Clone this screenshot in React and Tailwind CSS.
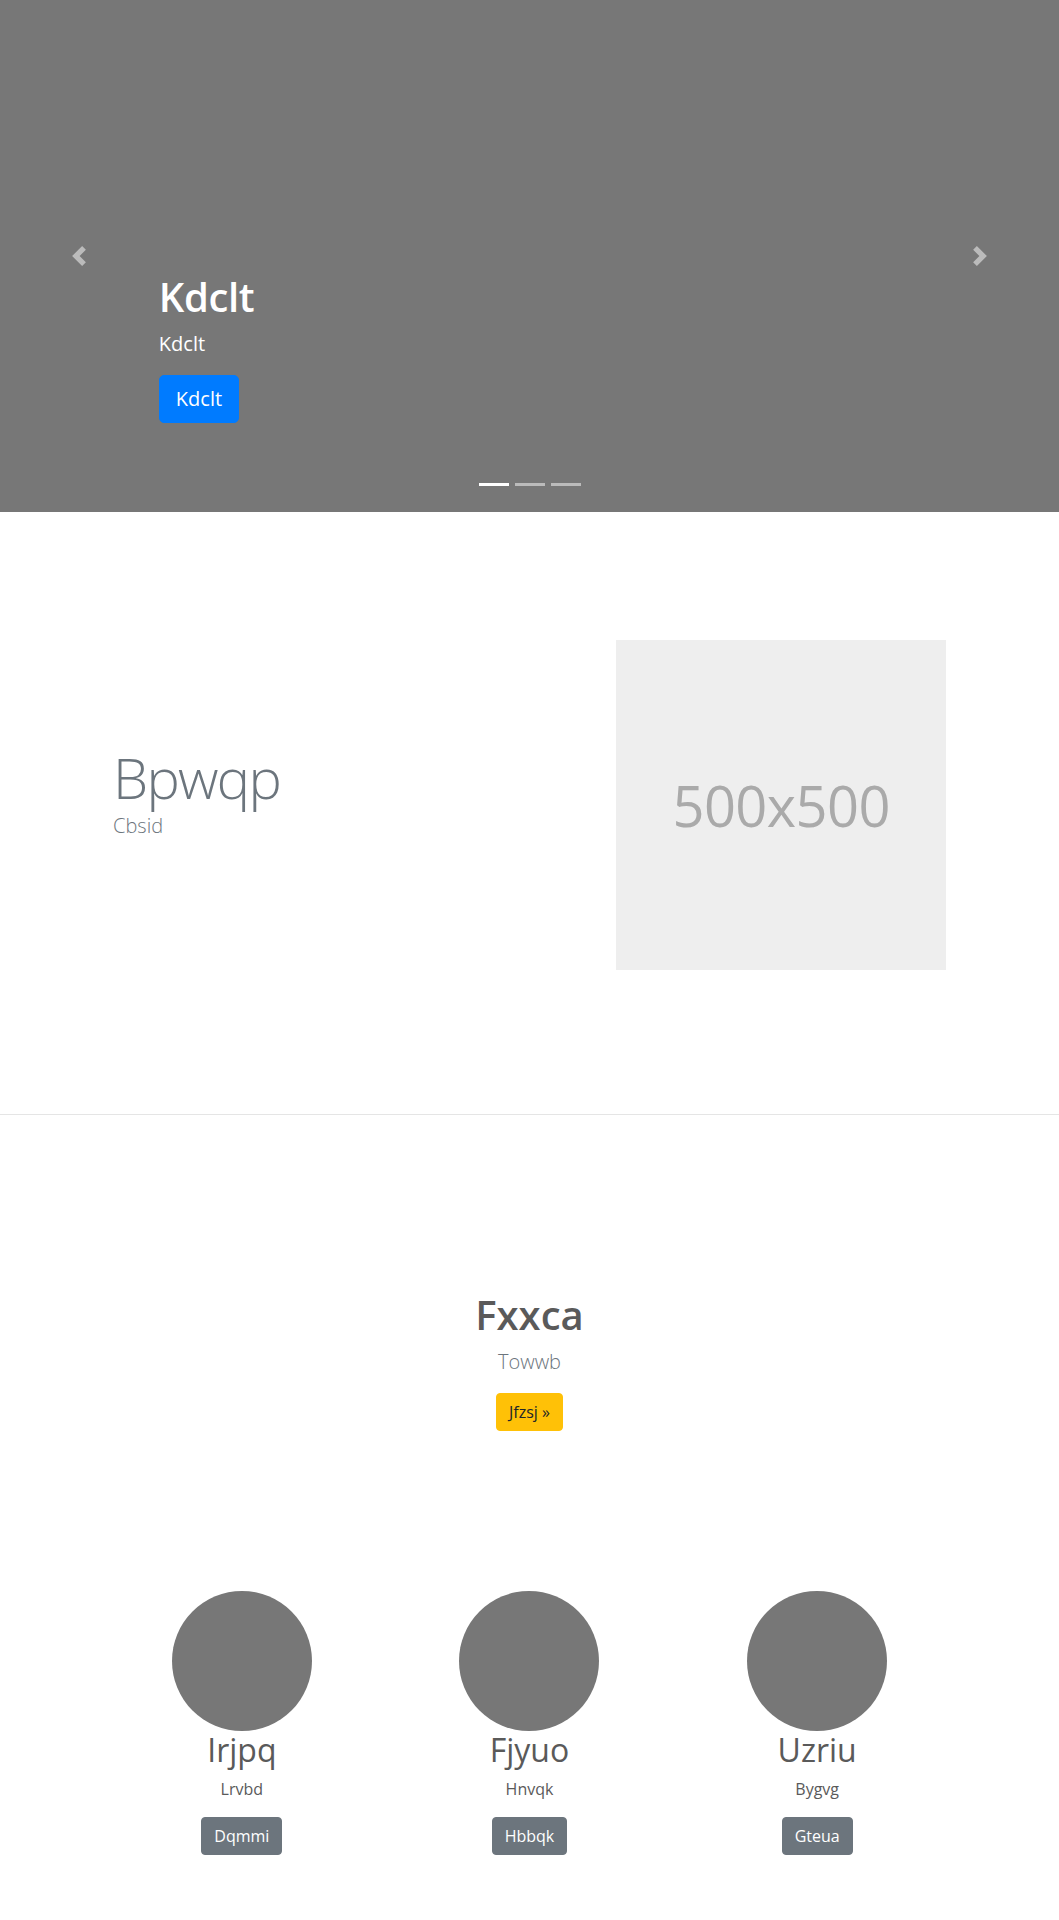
import React from "react";

function Chevron({ dir }) {
  return (
    <svg width="20" height="20" viewBox="0 0 8 8" fill="#fff">
      {dir === "prev" ? (
        <path d="M5.25 0l-4 4 4 4 1.5-1.5L4.25 4l2.5-2.5L5.25 0z" />
      ) : (
        <path d="M2.75 0l-1.5 1.5L3.75 4l-2.5 2.5L2.75 8l4-4-4-4z" />
      )}
    </svg>
  );
}

function Member({ name, text, cta }) {
  return (
    <div className="flex flex-col items-center text-center">
      <div className="w-[140px] h-[140px] rounded-full bg-[#777]" />
      <h2 className="text-[32px] leading-[1.2] font-normal mb-2 text-[#5a5a5a]">{name}</h2>
      <p className="text-base leading-6 mb-4 mx-3 text-[#5a5a5a]">{text}</p>
      <button className="bg-[#6c757d] text-white text-base leading-6 px-3 py-[6px] border border-[#6c757d] rounded-[4px]">
        {cta}
      </button>
    </div>
  );
}

export default function App() {
  return (
    <div className="min-h-[1920px] bg-white text-[#5a5a5a] font-['Open_Sans','Noto_Sans',sans-serif]">
      {/* Carousel */}
      <div className="relative h-[512px] bg-[#777] overflow-hidden">
        <div className="absolute left-0 top-0 bottom-0 w-[15%] flex items-center justify-center opacity-50">
          <Chevron dir="prev" />
        </div>
        <div className="absolute right-0 top-0 bottom-0 w-[15%] flex items-center justify-center opacity-50">
          <Chevron dir="next" />
        </div>
        <div className="absolute left-[15%] right-[15%] bottom-[89px] text-left text-white">
          <h1 className="text-[40px] leading-[1.2] font-semibold tracking-[-0.01em] mb-2">Kdclt</h1>
          <p className="text-[20px] leading-[1.5] mb-4">Kdclt</p>
          <button className="bg-[#007bff] text-white text-[20px] leading-[1.5] px-4 py-2 border border-[#007bff] rounded-[5px]">
            Kdclt
          </button>
        </div>
        <div className="absolute left-0 right-0 bottom-[26px] flex justify-center">
          <span className="w-[30px] h-[3px] mx-[3px] bg-white" />
          <span className="w-[30px] h-[3px] mx-[3px] bg-white opacity-50" />
          <span className="w-[30px] h-[3px] mx-[3px] bg-white opacity-50" />
        </div>
      </div>

      {/* Featurette */}
      <div className="w-[863px] mx-auto grid grid-cols-[7fr_5fr] items-center pt-[128px] pb-[144px]">
        <div className="px-[15px]">
          <h1 className="text-[56px] leading-[1.2] font-light tracking-[-0.03em] text-[#6c757d]">Bpwqp</h1>
          <p className="text-[20px] leading-[1.5] font-light text-[#6c757d] mb-6">Cbsid</p>
        </div>
        <div className="px-[15px]">
          <div className="w-full aspect-square bg-[#eee] flex items-center justify-center">
            <span className="text-[56px] leading-none text-[#aaa] tracking-[-0.01em]">500x500</span>
          </div>
        </div>
      </div>
      <div className="border-t border-[#e5e5e5]" />

      {/* Jumbotron-like */}
      <div className="text-center pt-[176px] pb-[160px]">
        <h1 className="text-[40px] leading-[1.2] font-semibold mb-2 text-[#5a5a5a]">Fxxca</h1>
        <p className="text-[20px] leading-[1.5] font-light text-[#6c757d] mb-4">Towwb</p>
        <button className="bg-[#ffc107] text-[#212529] text-base leading-6 px-3 py-[6px] border border-[#ffc107] rounded-[4px]">
          Jfzsj »
        </button>
      </div>

      {/* Marketing */}
      <div className="w-[863px] mx-auto grid grid-cols-3">
        <Member name="Irjpq" text="Lrvbd" cta="Dqmmi" />
        <Member name="Fjyuo" text="Hnvqk" cta="Hbbqk" />
        <Member name="Uzriu" text="Bygvg" cta="Gteua" />
      </div>
    </div>
  );
}
